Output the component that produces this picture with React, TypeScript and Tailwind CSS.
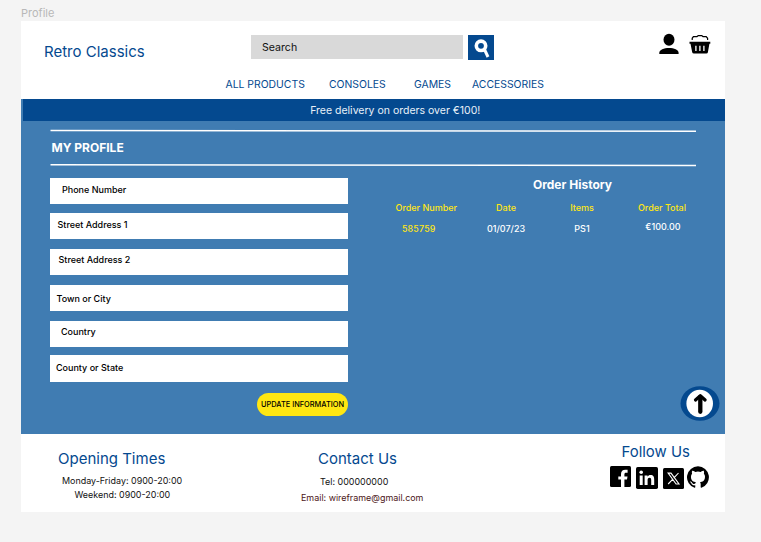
import React from "react";

const fields = [
  { label: "Phone Number", box: "mt-0 ml-[49.5px] pl-[12.5px] h-[26px]", text: "-mt-[1px]" },
  { label: "Street Address 1", box: "mt-[9px] ml-[49.5px] pl-[8px] h-[26px]", text: "-mt-[2px]" },
  { label: "Street Address 2", box: "mt-[10px] ml-[50px] pl-[8.5px] h-[26.5px]", text: "-mt-[4px]" },
  { label: "Town or City", box: "mt-[9.5px] ml-[50px] pl-[6.5px] h-[26.5px]", text: "mt-[1px]" },
  { label: "Country", box: "mt-[9.5px] ml-[50px] pl-[11px] h-[26.5px]", text: "-mt-[5px]" },
  { label: "County or State", box: "mt-[8px] ml-[49.5px] pl-[6.5px] h-[26.5px]", text: "-mt-[1px]" },
];

const columns = [
  { head: "Order Number", value: "585759", cell: "w-[79.5px]", val: "text-[#ffe712] -ml-[15px] text-[8.8px] tracking-[0.2px]" },
  { head: "Date", value: "01/07/23", cell: "w-[80px]", val: "text-white" },
  { head: "Items", value: "PS1", cell: "w-[72px]", val: "text-white" },
  { head: "Order Total", value: "€100.00", cell: "w-[88px]", val: "text-white -mt-[2px] pl-[2px]" },
];

function Rule({ y1, y2 }: { y1: number; y2: number }) {
  return (
    <svg className="block ml-[29px] w-[647px] h-[4px]" viewBox="0 0 647 4">
      <line x1="0.5" y1={y1} x2="646" y2={y2} stroke="#fff" strokeWidth="1.5" />
    </svg>
  );
}

function Header() {
  return (
    <header className="flex h-[78px] bg-white">
      <h1 className="ml-[23px] mt-[21px] w-[207px] text-[15px] leading-[20px] text-[#04498f] whitespace-nowrap">
        Retro Classics
      </h1>
      <div className="w-[390px] shrink-0">
        <div className="mt-[14px] flex">
          <div className="flex h-[24px] w-[212px] items-center bg-[#d9d9d9] pl-[11px] pt-[1px] text-[10.6px] text-[#111]">Search</div>
          <button className="ml-[5px] flex h-[25px] w-[26px] items-center justify-center bg-[#04498f]">
            <svg className="h-[25px] w-[26px]" viewBox="0 0 26 25">
              <circle cx="13" cy="10.8" r="4.7" fill="none" stroke="#fff" strokeWidth="3.6" />
              <path d="M16.500 14.500l3.500 7.500" stroke="#fff" strokeWidth="3" />
            </svg>
          </button>
        </div>
        <nav className="-ml-[25.5px] mt-[17px] flex text-[10.4px] leading-[16px] text-[#04498f] whitespace-nowrap">
          <a className="w-[103.5px]">ALL PRODUCTS</a>
          <a className="w-[85px]">CONSOLES</a>
          <a className="w-[58px]">GAMES</a>
          <a>ACCESSORIES</a>
        </nav>
      </div>
      <div className="ml-[17.5px] mt-[12px] flex shrink-0">
        <svg className="h-[22px] w-[20px]" viewBox="0 0 20 22">
          <ellipse cx="10" cy="6.8" rx="5.5" ry="6" />
          <path d="M.3 21v-1.200C.3 17 5 15 10 15s9.600 2 9.600 4.800V21z" />
        </svg>
        <svg className="ml-[10px] h-[22px] w-[22px]" viewBox="0 0 22 22">
          <path d="M3.200 7V5.300L4.400 3.600H8L9.300 2.600h3.400l1.300 1h3.200l1.400 1.700V7" fill="none" stroke="#000" strokeWidth="1.2" />
          <path d="M.5 8.700h20.800v2h-.9L18.900 19.200q-.2 1.400-1.600 1.400H4.900Q3.500 20.600 3.200 19.200L1.500 10.700H.5z" />
          <path d="M6.900 12.700v5.200M10.900 12.700v5.200M14.900 12.700v5.200" stroke="#fff" strokeWidth="1.300" />
        </svg>
      </div>
    </header>
  );
}

function Social() {
  return (
    <div className="ml-[9px] mt-[4px] flex">
      <svg className="h-[21px] w-[21px]" viewBox="0 0 21 21">
        <rect width="21" height="21" rx="1.5" />
        <path d="M11 21v-7.500H8.300v-3.100H11V8c0-2.900 1.700-4.300 4.300-4.300h2.300v3h-1.500c-1.300 0-1.700.6-1.700 1.700v2h3.100l-.5 3.100h-2.600V21z" fill="#fff" />
      </svg>
      <svg className="ml-[5px] mt-[0.5px] h-[22px] w-[22px]" viewBox="0 0 22 22">
        <rect width="22" height="22" rx="1.700" />
        <circle cx="5.200" cy="5.300" r="1.800" fill="#fff" />
        <path d="M3.700 8.400h3V18h-3zM8.600 8.400h2.900v1.300c.6-1 1.700-1.600 3-1.600 3 0 3.700 2 3.700 4.600V18h-3v-4.700c0-1.300-.2-2.500-1.700-2.500s-1.900 1.100-1.900 2.500V18h-3z" fill="#fff" />
      </svg>
      <svg className="ml-[5px] mt-[2px] h-[21px] w-[21px]" viewBox="0 0 21 21">
        <rect width="21" height="21" rx="1.500" />
        <path d="M5.100 5.100h2.900l8 10.900h-2.900zM15.500 5l-4.800 5.200M9.600 11.300L5.200 16" fill="none" stroke="#fff" strokeWidth="1.100" />
      </svg>
      <svg className="ml-[3px] -mt-[0.5px] h-[22px] w-[22px]" viewBox="0 0 24 24">
        <path d="M12 .3a12 12 0 0 0-3.800 23.380c.6.12.83-.26.83-.57L9 21.070c-3.340.72-4.040-1.610-4.040-1.610-.55-1.390-1.340-1.760-1.340-1.760-1.080-.74.090-.73.090-.73 1.200.09 1.830 1.240 1.830 1.240 1.080 1.830 2.810 1.300 3.500 1 .1-.78.420-1.310.760-1.610-2.670-.3-5.470-1.330-5.470-5.930 0-1.310.470-2.380 1.240-3.220-.14-.3-.54-1.520.1-3.180 0 0 1-.32 3.300 1.230a11.500 11.500 0 0 1 6 0c2.280-1.550 3.290-1.230 3.290-1.230.64 1.660.240 2.880.120 3.180a4.650 4.650 0 0 1 1.230 3.220c0 4.610-2.800 5.630-5.480 5.920.420.360.810 1.100.810 2.220l-.010 3.290c0 .310.200.690.820.570A12 12 0 0 0 12 .3" />
      </svg>
    </div>
  );
}

function Profile() {
  return (
    <main className="h-[313px] bg-[#407cb2] text-white">
      <div className="pt-[8px]">
        <Rule y1={1.4} y2={2.3} />
        <h2 className="ml-[30.5px] flex h-[30px] items-center text-[12px] font-bold">MY PROFILE</h2>
        <Rule y1={1.7} y2={2.5} />
      </div>
      <div className="flex">
        <form className="-ml-[21px] w-[348.5px] shrink-0 pt-[10.5px] text-[9px] font-medium text-black">
          {fields.map((f) => (
            <div key={f.label} className={"flex w-[298px] items-center bg-white " + f.box}>
              <span className={f.text}>{f.label}</span>
            </div>
          ))}
          <button className="ml-[257px] mt-[11.5px] flex h-[23px] w-[91px] items-center justify-center rounded-full bg-[#ffe712] text-[7.4px] font-medium whitespace-nowrap">
            UPDATE INFORMATION
          </button>
        </form>
        <section className="ml-[38px] w-[338px] shrink-0">
          <h2 className="ml-[34px] mt-[9px] text-center text-[12px] font-bold leading-[18px]">Order History</h2>
          <div className="mt-[6.5px] flex text-center text-[9px] font-medium leading-[14px] whitespace-nowrap">
            {columns.map((c) => (
              <div key={c.head} className={c.cell}>
                <div className="text-[#ffe712]">{c.head}</div>
                <div className="mt-[7px]">
                  <div className={c.val}>{c.value}</div>
                </div>
              </div>
            ))}
          </div>
          <button className="ml-[293px] mt-[150.5px] block">
            <svg className="block h-[35px] w-[40px]" viewBox="0 0 40 35">
              <ellipse cx="20" cy="17.500" rx="19.500" ry="17.300" fill="#04498f" />
              <ellipse cx="19.700" cy="17.500" rx="13.300" ry="13.800" fill="#fff" />
              <path d="M20.300 25.800V11" stroke="#000" strokeWidth="4.300" strokeLinecap="round" />
              <path d="M15.500 14l4.800-4.300 4.800 4.300" fill="none" stroke="#000" strokeWidth="3.200" strokeLinejoin="round" strokeLinecap="round" />
            </svg>
          </button>
        </section>
      </div>
    </main>
  );
}

export default function App() {
  return (
    <div className="h-[542px] w-[761px] overflow-hidden bg-[#f4f4f4] font-['Inter',sans-serif]">
      <div className="h-[21px] pl-[21px] pt-[5px] text-[11px] leading-[16px] text-[#b8b8b8]">Profile</div>
      <div className="ml-[21px] w-[703.5px]">
        <Header />
        <div className="h-[22px] border-l-2 border-[#407cb2] bg-[#04498f] pl-[43px] pt-[1px] text-center text-[10.5px] leading-[21px] text-[#e8f0f8]">
          Free delivery on orders over €100!
        </div>
        <Profile />
        <footer className="flex h-[78px] bg-white text-[#111] whitespace-nowrap">
          <section className="ml-[37px] w-[243px] shrink-0 text-[8.95px]">
            <h3 className="mt-[15px] text-[15px] leading-[20px] text-[#04498f]">Opening Times</h3>
            <p className="ml-[4px] mt-[4.5px] leading-[14px]">Monday-Friday: 0900-20:00</p>
            <p className="ml-[16.5px] leading-[14px]">Weekend: 0900-20:00</p>
          </section>
          <section className="w-[300px] shrink-0 text-[8.95px]">
            <h3 className="ml-[17px] mt-[15px] text-[15px] leading-[20px] text-[#04498f]">Contact Us</h3>
            <p className="ml-[19px] mt-[6px] leading-[14px]">Tel: 000000000</p>
            <p className="mt-[2px] leading-[14px] text-[#4b1518]">Email: wireframe@gmail.com</p>
          </section>
          <section>
            <h3 className="ml-[20.5px] mt-[8px] text-[14.9px] leading-[20px] text-[#04498f]">Follow Us</h3>
            <Social />
          </section>
        </footer>
      </div>
    </div>
  );
}
